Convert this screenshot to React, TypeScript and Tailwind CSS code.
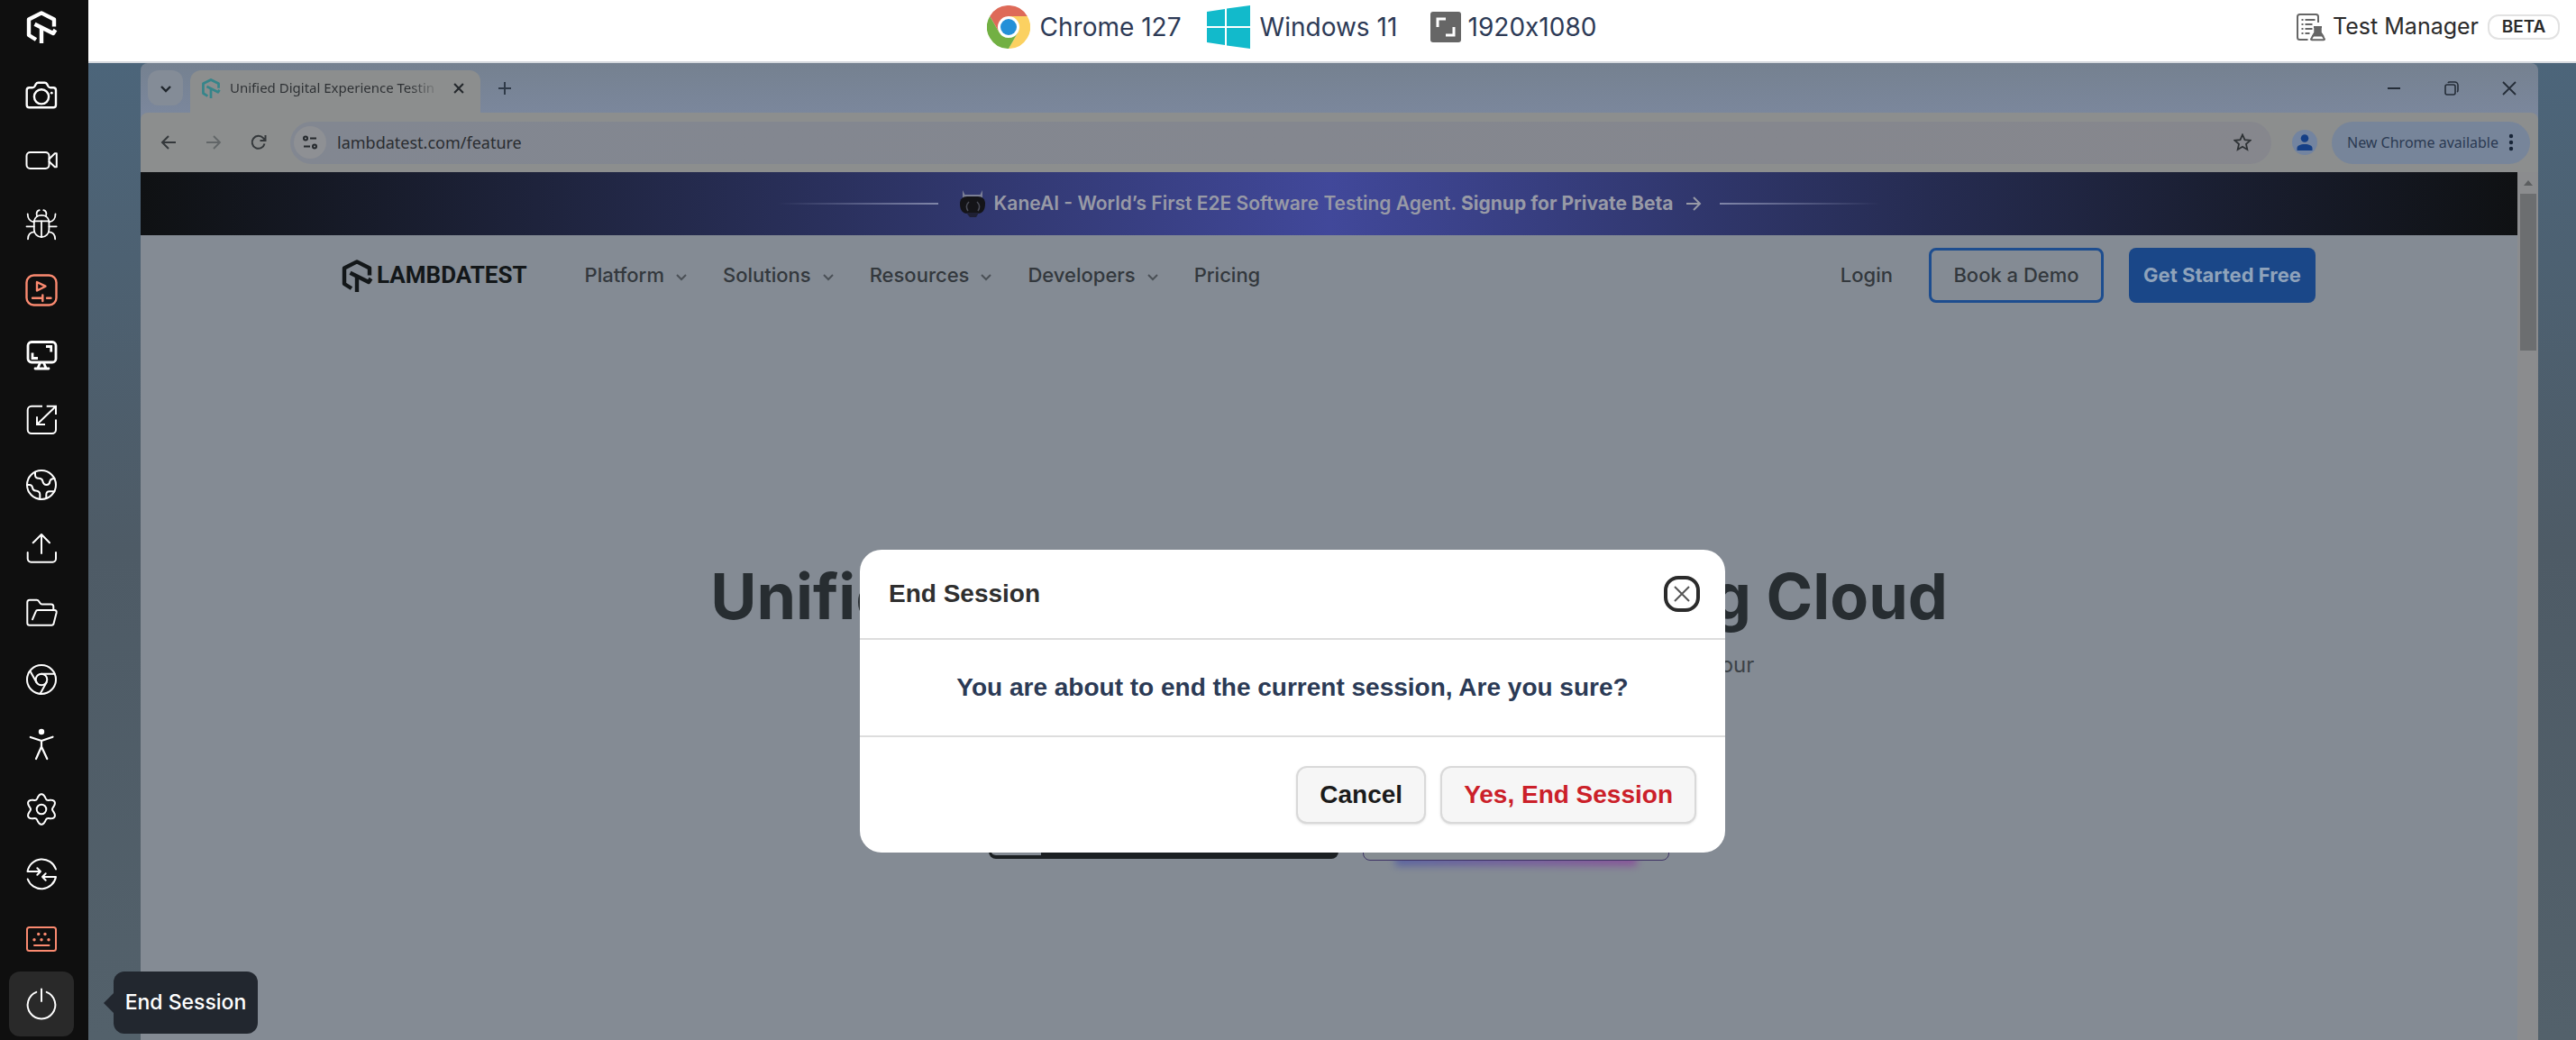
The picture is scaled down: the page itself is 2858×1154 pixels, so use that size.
import React from "react";

type IconProps = { children: React.ReactNode; className?: string; width?: number };

function Glyph({ children, className = "text-white", width = 2 }: IconProps) {
  return (
    <svg
      viewBox="0 0 36 36"
      className={`size-9 ${className}`}
      fill="none"
      stroke="currentColor"
      strokeWidth={width}
      strokeLinecap="round"
      strokeLinejoin="round"
      aria-hidden="true"
    >
      {children}
    </svg>
  );
}

function LambdaMark({ className }: { className: string }) {
  return (
    <svg viewBox="0 0 36 36" className={className} fill="none" stroke="currentColor" strokeWidth="4.4" strokeLinejoin="round" aria-hidden="true">
      <path d="M32 17.5V9.5L18 2.4 4 9.5v17.5l8 5" />
      <path d="M18 36V18" />
      <path d="M10.5 14.8 31 25l2.5-4" />
    </svg>
  );
}

const gearPath =
  Array.from({ length: 120 }, (_, i) => {
    const a = (i / 120) * Math.PI * 2;
    const r = 14.4 + 2.4 * Math.cos(6 * (a - Math.PI / 2));
    const x = (18 - r * Math.cos(a)).toFixed(2);
    const y = (18 - r * Math.sin(a)).toFixed(2);
    return `${i === 0 ? "M" : "L"}${x} ${y}`;
  }).join("") + "Z";

const tools: { label: string; icon: React.ReactNode }[] = [
  {
    label: "Screenshot",
    icon: (
      <Glyph width={2.4}>
        <path d="M4.5 9.3H8c1.5 0 2-.6 2.7-1.8l1-2c.8-1.3 1.3-1.7 2.8-1.7h7c1.5 0 2 .4 2.8 1.7l1 2c.7 1.2 1.2 1.8 2.7 1.8h3.2c1.6 0 2.8 1.2 2.8 2.8v16.3c0 1.6-1.2 2.8-2.8 2.8H4.5c-1.6 0-2.8-1.2-2.8-2.8V12.1c0-1.6 1.2-2.8 2.8-2.8z" />
        <circle cx="18" cy="19.3" r="8.1" />
        <circle cx="29.3" cy="15.2" r="1.4" fill="currentColor" stroke="none" />
      </Glyph>
    ),
  },
  {
    label: "Record video",
    icon: (
      <Glyph>
        <rect x="1.5" y="9" width="25" height="18" rx="4" />
        <path d="M26.5 16.5l6.3-6.2h2v15h-2l-6.3-6" />
      </Glyph>
    ),
  },
  {
    label: "Report a bug",
    icon: (
      <Glyph width={1.8}>
        <path d="M9.8 13.3h16.6v9.4a8.3 8.3 0 0 1-16.6 0z" />
        <path d="M9.8 13.3c.6-3.8 4-6.5 8.3-6.5s7.7 2.7 8.3 6.5M18 13.3V31" />
        <path d="M13 7.8c-1-3.3.3-5.8 2.7-6.6M23 7.8c1-3.3-.3-5.8-2.7-6.6" />
        <path d="M2.7 5.5c0 4.5 2.5 8.5 7.1 8.8M33.5 5.5c0 4.5-2.5 8.5-7.1 8.8M1.5 19.3h8.3M26.4 19.3h8.3M3 33.3c0-4.5 2.5-7.8 6.8-8M33.2 33.3c0-4.5-2.5-7.8-6.8-8" />
      </Glyph>
    ),
  },
  {
    label: "Playback controls",
    icon: (
      <Glyph className="text-[#fb8a70]" width={2.4}>
        <rect x="1.5" y="1.5" width="33" height="33" rx="8" />
        <path d="M13 9l9.5 4.7L13 18.5z" />
        <path d="M8 26.7h11.3M19.3 23.5v6.5M24 26.7h4.5" />
      </Glyph>
    ),
  },
  {
    label: "Resolution",
    icon: (
      <Glyph width={2.8}>
        <rect x="3" y="3.5" width="31" height="22.5" rx="4" />
        <path d="M23 8.5h5.7v6M8 15.5v6h6" strokeLinecap="butt" strokeLinejoin="miter" />
        <path d="M16.5 26.5l-2.5 6M20.5 26.5l2.5 6M11 33h15" />
      </Glyph>
    ),
  },
  {
    label: "Switch view",
    icon: (
      <Glyph width={2}>
        <path d="M19 2.7H7a4.3 4.3 0 0 0-4.3 4.3v21.7A4.3 4.3 0 0 0 7 33h22.7a4.3 4.3 0 0 0 4.3-4.3V17.5" strokeLinecap="butt" />
        <path d="M23.7 2.7H34V12M34 2.7L13 23M13 14.3V23h9" strokeLinecap="butt" strokeLinejoin="miter" />
      </Glyph>
    ),
  },
  {
    label: "Geolocation",
    icon: (
      <Glyph>
        <circle cx="18" cy="18" r="16" />
        <path d="M11 3.7V7c0 3 2 3.7 4 3.7 3 0 3.8.8 4.3 3 .6 3 2 4.3 4.4 4.3s3.3-1.5 3.6-3.5c.3-2.5 1.5-3.5 5.2-3.5" />
        <path d="M2 18h2.5c2.500 0 3.200 1 3.500 3 .3 2.300 1.300 3.300 3.500 3.500 3 .3 4.800 1.300 4.800 4V34M23.300 33v-4c0-2.500 1.200-3.700 3.500-3.700h5.500" />
      </Glyph>
    ),
  },
  {
    label: "Upload",
    icon: (
      <Glyph>
        <path d="M18 1v21M8.7 10.3L18 1l9 9.3" />
        <path d="M2.7 21v7a3.7 3.7 0 0 0 3.7 3.7h24A3.7 3.7 0 0 0 34 28v-7" />
      </Glyph>
    ),
  },
  {
    label: "Files",
    icon: (
      <Glyph>
        <path d="M31.3 12.5V9c0-1.5-.8-2.5-2.5-2.5H18.5c-1 0-1.5-.4-2-1.2L15 3c-.6-1-1.2-1.3-2.2-1.3h-8C3.2 1.7 2.3 2.6 2.3 4.2v23c0 1.6.9 2.5 2.5 2.5h24.5c1.3 0 2-.7 2.3-2l3-11.7c.4-1.8-.4-3-2-3H14c-1.3 0-2 .6-2.4 1.8L8 23.3" />
      </Glyph>
    ),
  },
  {
    label: "Developer tools",
    icon: (
      <Glyph>
        <circle cx="18" cy="18" r="16" />
        <circle cx="18" cy="18" r="6.3" />
        <path d="M18 11.7h14.5M5.5 8.7l7 12.5M23.5 21.2L16.5 34" />
      </Glyph>
    ),
  },
  {
    label: "Accessibility",
    icon: (
      <Glyph width={2.2}>
        <circle cx="18" cy="4" r="3.2" fill="currentColor" stroke="none" />
        <path d="M5.8 10L18 14l12.5-4.3M18 14v6.5M12 34l6-13.5L24.3 34" />
      </Glyph>
    ),
  },
  {
    label: "Settings",
    icon: (
      <Glyph>
        <path d={gearPath} />
        <circle cx="18" cy="18" r="5.3" />
      </Glyph>
    ),
  },
  {
    label: "Switch session",
    icon: (
      <Glyph>
        <path d="M34 12.5A16.3 16.3 0 0 0 2.5 15H17M13.3 11.3L17 15l-3.7 3.7" />
        <path d="M2.7 23.5A16.3 16.3 0 0 0 34 21H19M22.7 17.3L19 21l3.7 3.7" />
      </Glyph>
    ),
  },
  {
    label: "Keyboard",
    icon: (
      <Glyph className="text-[#fb8a70]">
        <rect x="2" y="5" width="32" height="26" rx="2.5" />
        <path d="M10 25h16.5" />
        <g fill="currentColor" stroke="none">
          <circle cx="14.7" cy="12.5" r="1.7" />
          <circle cx="22" cy="12.5" r="1.7" />
          <circle cx="10" cy="18.7" r="1.7" />
          <circle cx="18" cy="18.7" r="1.7" />
          <circle cx="26" cy="18.7" r="1.7" />
        </g>
      </Glyph>
    ),
  },
];

function Sidebar() {
  return (
    <aside className="flex w-[98px] shrink-0 flex-col bg-[#0f0f0f] pr-1.5">
      <a href="#home" aria-label="Home" className="flex h-[70px] justify-center pt-3 text-white">
        <LambdaMark className="size-9" />
      </a>
      <nav aria-label="Session tools" className="flex flex-col items-center">
        {tools.map((t) => (
          <button key={t.label} aria-label={t.label} className="flex size-[72px] items-center justify-center">
            {t.icon}
          </button>
        ))}
        <div className="relative">
          <button aria-label="End Session" aria-describedby="end-tip" className="flex size-[72px] items-center justify-center rounded-xl bg-[#292929]">
            <Glyph>
              <path d="M18 1.5V15M12.3 4.9a15.3 15.3 0 1 0 11.4 0" />
            </Glyph>
          </button>
          <div
            id="end-tip"
            role="tooltip"
            className="absolute top-0 left-[116px] flex h-[69px] w-40 items-center justify-center rounded-xl bg-[#22272f] text-[23px] font-medium whitespace-nowrap text-white"
          >
            <span className="absolute top-6 -left-[11px] border-y-[11px] border-r-[11px] border-y-transparent border-r-[#22272f]" />
            End Session
          </div>
        </div>
      </nav>
    </aside>
  );
}

function ChromeLogo() {
  const arc = "M24 12H44.8A24 24 0 0 0 3.2 12L13.6 30A12 12 0 0 1 24 12z";
  return (
    <svg viewBox="0 0 48 48" className="size-12" aria-hidden="true">
      <circle cx="24" cy="24" r="12" fill="#fff" />
      <path d={arc} fill="#de6a58" />
      <path d={arc} fill="#fbd161" transform="rotate(120 24 24)" />
      <path d={arc} fill="#72b043" transform="rotate(240 24 24)" />
      <circle cx="24" cy="24" r="11" fill="#fff" />
      <circle cx="24" cy="24" r="9" fill="#2490d8" />
    </svg>
  );
}

function TopBar() {
  return (
    <header className="flex h-[70px] shrink-0 items-start border-b-2 border-[#d5d9de] bg-white">
      <div className="flex-1" />
      <div className="flex items-center pt-1.5 pr-[72px] text-[28px] text-[#2d3a56]">
        <div className="flex w-[244px] items-center gap-[11px]">
          <ChromeLogo />
          Chrome 127
        </div>
        <div className="flex w-[248px] items-center gap-[11px]">
          <svg viewBox="0 0 48 48" className="size-12" fill="#12bacb" aria-hidden="true">
            <path d="M0 7l20-3v19H0zM22 3.6L48 0v23H22zM0 25h20v19L0 41zM22 25h26v23l-26-3.6z" />
          </svg>
          Windows 11
        </div>
        <div className="flex items-center gap-2 [font-feature-settings:'calt'_0]">
          <svg viewBox="0 0 34 34" className="size-[34px]" aria-hidden="true">
            <rect width="34" height="34" rx="3" fill="#666" />
            <path d="M8 17V8h9M17 26h9v-9" fill="none" stroke="#fff" strokeWidth="3" />
          </svg>
          1920x1080
        </div>
      </div>
      <div className="flex flex-1 items-center justify-end pt-2.5 pr-[18px]">
        <a href="#test-manager" className="flex h-10 items-center text-[25px] text-[#2b2b2b]">
          <svg viewBox="0 0 32 32" className="mr-2 size-8" fill="none" stroke="#666" strokeWidth="2" aria-hidden="true">
            <path d="M24 11V4.5C24 3 23.3 2 21.5 2h-18C2 2 1 3 1 4.5v23C1 29 2 30 3.5 30h9" />
            <path d="M5.5 8h2M9.5 8h11M5.5 13h2M9.5 13h8M5.5 18h2M9.5 18h8M5.5 23h2M9.5 23h5" />
            <path d="M19 16h9M20.5 16v6L16 29.5c0 .5.3.8 1 .8h13c.7 0 1-.3 1-.8L26.5 22v-6z" />
            <path d="M20.5 16h6v6l2.5 3.5H18.3l2.2-3.5z" fill="#666" />
          </svg>
          Test Manager
          <span className="ml-2.5 flex h-[28px] w-20 items-center justify-center rounded-xl border-2 border-[#e2e2e2] text-[19px] font-semibold">BETA</span>
        </a>
      </div>
    </header>
  );
}

function Icon({ d, className, width = 2, size = 18 }: { d: string; className: string; width?: number; size?: number }) {
  return (
    <svg viewBox={`0 0 ${size} ${size}`} className={className} fill="none" stroke="currentColor" strokeWidth={width} aria-hidden="true">
      <path d={d} />
    </svg>
  );
}

function TabStrip() {
  return (
    <div className="flex h-[55px] items-end rounded-t-lg bg-linear-to-b from-[#758190] to-[#7b879c] pl-2 font-['Noto_Sans']">
      <button aria-label="Search tabs" className="mb-2 flex size-[39px] items-center justify-center rounded-xl bg-[#848c97] text-[#20262c]">
        <Icon d="M4 7l5 5 5-5" className="size-[18px]" width={2.4} />
      </button>
      <div className="ml-2 flex h-[47px] w-[322px] items-center rounded-t-xl bg-[#8c8e8e] pr-4 pb-2 pl-3">
        <LambdaMark className="size-[22px] shrink-0 text-[#36858a]" />
        <span className="ml-2.5 flex-1 overflow-hidden bg-linear-to-r from-[#2d3033] from-85% to-[#8c8e8e] bg-clip-text text-[15px] whitespace-nowrap text-transparent">
          Unified Digital Experience Testin
        </span>
        <button aria-label="Close tab" className="ml-3 text-[#24282c]">
          <Icon d="M3.5 3.5l11 11M14.5 3.5l-11 11" className="size-4" width={2.4} />
        </button>
      </div>
      <button aria-label="New tab" className="mb-[18px] ml-[18px] text-[#2f3a48]">
        <Icon d="M9 2v14M2 9h14" className="size-[18px]" />
      </button>
      <div className="mb-[18px] flex flex-1 items-center justify-end gap-[46px] pr-[23px] text-[#252d38]">
        <button aria-label="Minimise">
          <Icon d="M2 9h14" className="size-[18px]" />
        </button>
        <button aria-label="Restore">
          <Icon d="M2 7a2 2 0 0 1 2-2h7a2 2 0 0 1 2 2v7a2 2 0 0 1-2 2H4a2 2 0 0 1-2-2zM5 3c.3-.7 1-1 2-1h5.5A3.5 3.5 0 0 1 16 5.5V11c0 1-.3 1.7-1 2" className="size-[18px]" width={1.6} />
        </button>
        <button aria-label="Close window">
          <Icon d="M2 2l14 14M16 2L2 16" className="size-[18px]" width={1.8} />
        </button>
      </div>
    </div>
  );
}

function Toolbar() {
  return (
    <div className="bg-[#7b879c]">
      <div className="flex h-[66px] items-center rounded-t-lg bg-[#8c8e8e] pr-[9px] pl-[22px] font-['Noto_Sans']">
        <button aria-label="Back" className="text-[#34383b]">
          <Icon d="M17 9H2M9 2L2 9l7 7" className="size-[18px]" />
        </button>
        <button aria-label="Forward" className="ml-8 text-[#626668]">
          <Icon d="M1 9h15M9 2l7 7-7 7" className="size-[18px]" width={1.8} />
        </button>
        <button aria-label="Reload" className="ml-8 text-[#34383b]">
          <Icon d="M15.5 10.5A7 7 0 1 1 14 4.2l2 2.3M16.5 1v6h-6" className="size-[18px]" />
        </button>
        <div className="ml-[26px] flex h-[47px] flex-1 items-center rounded-full bg-linear-to-r from-[#828791] to-[#86878d] pr-[22px] pl-1">
          <span className="flex size-9 items-center justify-center rounded-full bg-[#8e9094] text-[#24282c]">
            <Icon d="M2 4.5a2 2 0 1 0 4 0 2 2 0 1 0-4 0M9 4.5h7M12 13.5a2 2 0 1 0 4 0 2 2 0 1 0-4 0M2 13.5h7" className="size-[18px]" />
          </span>
          <input
            aria-label="Address"
            readOnly
            value="lambdatest.com/feature"
            className="ml-3 h-8 flex-1 bg-transparent text-lg text-[#2a2d31] outline-none"
          />
          <button aria-label="Bookmark" className="text-[#2d3134]">
            <Icon d="M10 1.5l2.5 5.7 6.1.6-4.6 4.1 1.3 6.1L10 14.8 4.7 18 6 11.9 1.4 7.8l6.1-.6z" className="size-5" size={20} width={1.8} />
          </button>
        </div>
        <button aria-label="Profile" className="ml-[23px] flex size-7 items-center justify-center rounded-full bg-[#7384a0] text-[#153f86]">
          <svg viewBox="0 0 18 18" className="size-[18px]" fill="currentColor" aria-hidden="true">
            <circle cx="9" cy="4.5" r="4.3" />
            <path d="M.5 18v-2.5C.5 12.5 4 11 9 11s8.5 1.5 8.5 4.5V18z" />
          </svg>
        </button>
        <button className="ml-4 flex h-[47px] w-[220px] items-center justify-between rounded-full bg-[#77859a] pr-[18px] pl-[17px] text-base whitespace-nowrap text-[#2b3a52]">
          New Chrome available
          <svg viewBox="0 0 6 20" className="h-5 w-1.5" fill="#182538" aria-hidden="true">
            <circle cx="3" cy="3" r="2.2" />
            <circle cx="3" cy="10" r="2.2" />
            <circle cx="3" cy="17" r="2.2" />
          </svg>
        </button>
      </div>
    </div>
  );
}

function Banner() {
  return (
    <div className="flex h-[70px] items-center justify-center bg-linear-to-r from-[#0f1113] via-[#41489a] to-[#0f1113] text-[21px] font-semibold text-[#989aa6]">
      <span className="h-0.5 w-[178px] bg-linear-to-r from-transparent to-[#8086a8]" />
      <svg viewBox="0 0 32 32" className="mr-2 ml-[22px] size-8" aria-hidden="true">
        <path d="M5 12V1l2.5 5h17L27 1v11z" fill="#7b7f96" />
        <path d="M2 16c0-5 3-8 8-8h12c5 0 8 3 8 8 0 7-3 11-8 11H10c-5 0-8-4-8-11z" fill="#141418" />
        <path d="M9 26h14l-3 5h-7z" fill="#1f2034" />
        <path d="M12 14c-3 3-3 7-1 10M21 14c3 3 3 7 1 10" stroke="#4b4d58" strokeWidth="1.5" fill="none" />
      </svg>
      <p>
        KaneAI - World’s First E2E Software Testing Agent. <a href="#signup" className="font-bold">Signup for Private Beta</a>
      </p>
      <Icon d="M1 9h15M9 2l7 7-7 7" className="mr-5 ml-3.5 size-[18px]" />
      <span className="h-0.5 w-[178px] bg-linear-to-l from-transparent to-[#8086a8]" />
    </div>
  );
}

function SiteNav() {
  return (
    <div className="flex h-[89px] items-center pr-[224px] pl-[222px] text-[22px] font-medium text-[#33383d]">
      <a href="#lambdatest" className="flex items-center gap-1 font-['Roboto'] text-[26px] font-bold text-[#131719]">
        <LambdaMark className="size-9" />
        LAMBDATEST
      </a>
      <nav aria-label="Site" className="ml-16 flex gap-[39px]">
        {["Platform", "Solutions", "Resources", "Developers"].map((item) => (
          <button key={item} className="flex items-center gap-3">
            {item}
            <Icon d="M2 6l5 5 5-5" className="size-3.5 text-[#4b5157]" size={14} />
          </button>
        ))}
        <a href="#pricing">Pricing</a>
      </nav>
      <div className="flex flex-1 items-center justify-end">
        <a href="#login">Login</a>
        <a href="#demo" className="ml-10 flex h-[61px] w-[194px] items-center justify-center rounded-lg border-[3px] border-[#1d4d8f]">
          Book a Demo
        </a>
        <a href="#start" className="ml-7 flex h-[61px] w-[207px] items-center justify-center rounded-lg bg-[#1a4788] font-bold text-[#8fa3bb]">
          Get Started Free
        </a>
      </div>
    </div>
  );
}

function Hero() {
  return (
    <div className="flex flex-col items-center pt-[264px]">
      <h1 className="text-[70px] leading-[96px] font-bold text-[#272d31]">Unified Digital Experience Testing Cloud</h1>
      <p className="mt-3 text-2xl leading-8 text-[#3c4247]">Drive innovation and ship faster with seamless end-to-end cloud testing for all your</p>
      <div className="mt-[136px] flex items-start gap-[27px]">
        <a href="#google" aria-label="Sign up with Google" className="flex h-[63px] w-[388px] items-stretch overflow-hidden rounded-lg bg-[#1c2023]">
          <span className="mb-0.5 w-[58px] rounded-bl-lg border-2 border-r-0 border-[#1c2023] bg-[#848b94]" />
        </a>
        <div className="relative">
          <span className="absolute inset-x-9 -bottom-1.5 h-4 bg-linear-to-r from-[#4a55a5] to-[#8a3f9c] opacity-70 blur-[4px]" />
          <a href="#email" aria-label="Sign up with email" className="relative block h-[65px] w-[340px] rounded-lg border border-[#3f3466] bg-[#868d92]" />
        </div>
      </div>
    </div>
  );
}

function RemoteDesktop() {
  return (
    <main className="flex flex-1 overflow-hidden bg-linear-to-b from-[#4c657a] via-[#4e5b66] to-[#53616b] pr-[42px] pl-[58px]">
      <div className="flex min-w-0 flex-1 flex-col">
        <TabStrip />
        <Toolbar />
        <div className="flex flex-1">
          <div className="min-w-0 flex-1 bg-[#848b94]">
            <Banner />
            <SiteNav />
            <Hero />
          </div>
          <div className="flex w-[23px] flex-col items-center bg-[#8b8c8e]">
            <svg viewBox="0 0 10 6" className="my-[9px] h-1.5 w-2.5 shrink-0" aria-hidden="true">
              <path d="M0 6l5-6 5 6z" fill="#5c5e60" />
            </svg>
            <span className="h-[174px] w-[18px] bg-[#6c6e70]" />
          </div>
        </div>
      </div>
    </main>
  );
}

function EndSessionDialog() {
  return (
    <div className="pointer-events-none absolute inset-0 flex items-start justify-center pt-[610px] pl-2.5">
      <section
        role="dialog"
        aria-labelledby="dialog-title"
        className="pointer-events-auto w-[960px] rounded-3xl bg-white font-['Liberation_Sans'] text-[28px] font-bold"
      >
        <div className="flex h-[100px] items-center justify-between border-b-2 border-[#dddddd] pr-7 pl-8">
          <h2 id="dialog-title" className="text-[#2f2f2f]">End Session</h2>
          <button aria-label="Close" className="flex size-10 items-center justify-center rounded-2xl border-4 border-[#2b2b2b] text-[#555]">
            <Icon d="M1 1l16 16M17 1L1 17" className="size-[18px]" />
          </button>
        </div>
        <p className="flex h-[108px] items-center justify-center border-b-2 border-[#dddddd] text-[#2b3a55]">
          You are about to end the current session, Are you sure?
        </p>
        <div className="flex justify-end gap-4 p-8">
          <button className="flex h-16 items-center rounded-xl border-2 border-[#d9d9d9] bg-[#f6f6f6] px-6 text-[#1b1b1b] shadow-sm">Cancel</button>
          <button className="flex h-16 items-center rounded-xl border-2 border-[#d9d9d9] bg-[#f6f6f6] px-6 text-[#cb2029] shadow-sm">
            Yes, End Session
          </button>
        </div>
      </section>
    </div>
  );
}

export default function App() {
  return (
    <div className="relative flex h-screen overflow-hidden font-['Inter',sans-serif]">
      <Sidebar />
      <div className="flex min-w-0 flex-1 flex-col">
        <TopBar />
        <RemoteDesktop />
      </div>
      <EndSessionDialog />
    </div>
  );
}
